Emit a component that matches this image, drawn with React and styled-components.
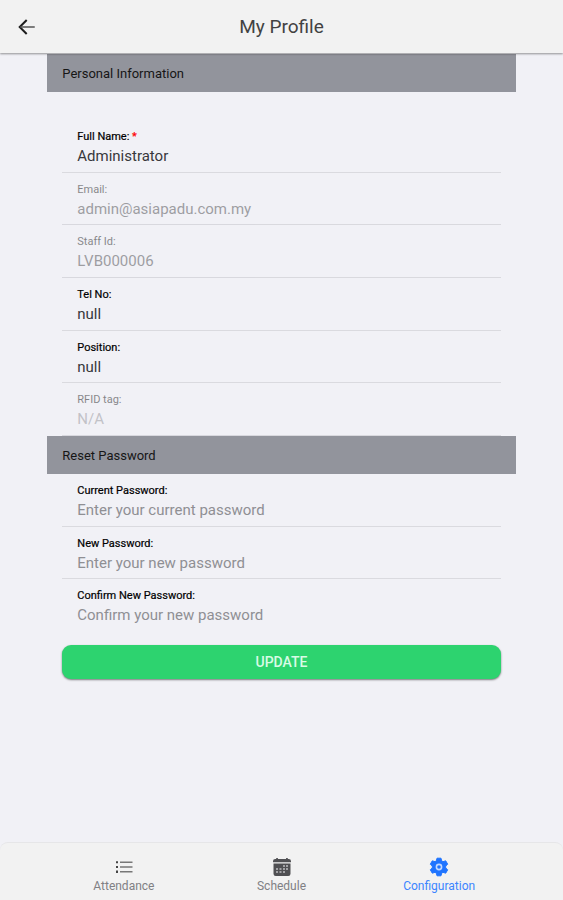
import React from "react";
import styled, { createGlobalStyle } from "styled-components";

const GlobalStyle = createGlobalStyle`
  *, *::before, *::after { box-sizing: border-box; }
  body {
    margin: 0;
    background: #f1f1f6;
    color: #202124;
    font-family: Roboto, "Liberation Sans", sans-serif;
  }
  button, input { font-family: inherit; }
`;

const Page = styled.div`
  display: flex;
  flex-direction: column;
  min-height: 100vh;
`;

const Header = styled.header`
  position: sticky;
  top: 0;
  z-index: 1;
  display: grid;
  grid-template-columns: 54px 1fr 54px;
  align-items: center;
  height: 53px;
  background: #f2f2f2;
  box-shadow: 0 1px 2px rgba(0, 0, 0, 0.4);
`;

const BackButton = styled.button`
  display: flex;
  align-items: center;
  justify-content: center;
  height: 40px;
  padding: 0;
  border: 0;
  background: none;
  color: #1c1c1c;
`;

const Title = styled.h1`
  margin: 0;
  font-size: 19px;
  font-weight: 400;
  line-height: 24px;
  text-align: center;
  color: #424242;
`;

const Form = styled.form`
  flex: 1;
  padding: 1px 8.4% 0;
`;

const SectionTitle = styled.h2`
  display: flex;
  align-items: center;
  height: 38px;
  margin: 0;
  padding: 0 15px;
  background: #92949c;
  color: #161616;
  font-size: 13px;
  font-weight: 400;
`;

const Fields = styled.div`
  display: grid;
  grid-auto-rows: 1fr;
  min-height: ${(p) => (p.$spaced ? 316 : 158)}px;
  margin-top: ${(p) => (p.$spaced ? 28 : 0)}px;
  padding: 0 15px;
`;

const Field = styled.div`
  display: flex;
  flex-direction: column;
  padding: 10px 15px 0;
  border-bottom: 1px solid ${(p) => (p.$plain ? "transparent" : p.$muted ? "#bcbcc2" : "#dadadf")};
  opacity: ${(p) => (p.$muted ? 0.45 : 1)};
`;

const Label = styled.label`
  font-size: 11px;
  line-height: 14px;
  color: #000;
  -webkit-text-stroke: ${(p) => (p.$muted ? "0" : "0.2px currentColor")};
`;

const Required = styled.span`
  color: #f00;
  -webkit-text-stroke-color: #f00;
`;

const TextInput = styled.input`
  width: 100%;
  height: 24px;
  padding: 0;
  border: 0;
  outline: 0;
  background: none;
  color: #38383c;
  font-size: 15px;

  &::placeholder {
    color: ${(p) => (p.disabled ? "#8a8a90" : "#8f8f94")};
    opacity: 1;
  }
`;

const UpdateButton = styled.button`
  display: block;
  width: calc(100% - 30px);
  height: 34px;
  margin: 13px 15px 24px;
  padding: 0 0 1px;
  border: 0;
  border-radius: 9px;
  background: #2dd36f;
  box-shadow: 0 1px 2px rgba(0, 0, 0, 0.5);
  color: #d9fbe6;
  font-size: 14px;
  font-weight: 500;
  text-transform: uppercase;
`;

const TabBar = styled.nav`
  position: sticky;
  bottom: 0;
  display: flex;
  justify-content: center;
  height: 58px;
  border-top: 1px solid #e6e6e8;
  border-radius: 8px 8px 0 0;
  background: #f2f2f2;
`;

const Tab = styled.a`
  display: flex;
  flex-direction: column;
  align-items: center;
  width: 28%;
  padding-top: 14px;
  gap: 2px;
  color: ${(p) => (p.$active ? "#3d85ff" : "#808084")};
  font-size: 12px;
  line-height: 14px;
  text-decoration: none;
`;

const Icon = styled.svg`
  display: block;
  width: 20px;
  height: 20px;
`;

const BackIcon = () => (
  <Icon viewBox="0 0 20 20" fill="none" stroke="currentColor" strokeLinecap="square" aria-hidden="true">
    <path d="M9 3.700 2.700 10 9 16.300" strokeWidth="2" />
    <path d="M4 10h13" strokeWidth="1.500" stroke="#555" />
  </Icon>
);

const ListIcon = () => (
  <Icon viewBox="0 0 20 20" aria-hidden="true">
    <path fill="#444" d="M2 4.200h2v2H2zM2 8.900h2v2.200H2zM2 13.600h2v2.400H2z" />
    <path fill="#777" d="M6 4.500h12.500v1.500H6zM6 9.300h12.500v1.500H6zM6 14h12.500v1.500H6z" />
  </Icon>
);

const CalendarIcon = () => (
  <Icon viewBox="0 0 20 20" fill="#505053" aria-hidden="true">
    <path d="M1 5.300V4.200A2.200 2.200 0 0 1 3.200 2h1V1h1.700v1h8.200V1h1.700v1h1A2.200 2.200 0 0 1 19 4.200v1.100z" />
    <path d="M1.500 6.500h17v10.300a2.200 2.200 0 0 1-2.200 2.200H3.700a2.200 2.200 0 0 1-2.200-2.200z" />
    <path fill="#a2a2a5" d="M11 8h2v2h-2zM14 8h2v2h-2zM4 11h2v2H4zM7.500 11h2v2h-2zM11 11h2v2h-2zM14 11h2v2h-2zM4 14h2v2H4zM7.500 14h2v2h-2zM11 14h2v2h-2z" />
  </Icon>
);

const GearIcon = () => (
  <Icon viewBox="0 0 20 20" aria-hidden="true">
    <path
      fill="#1f74ff"
      stroke="#1f74ff"
      strokeLinejoin="round"
      d="M8 1.200h4l.7 2.700 1.300.8 2.700-.9 2 3.400-2 1.900v1.800l2 1.900-2 3.400-2.700-.9-1.300.8-.7 2.700H8l-.7-2.700-1.300-.8-2.700.9-2-3.400 2-1.900V9.100l-2-1.900 2-3.400 2.700.9 1.300-.8z"
    />
    <circle cx="10" cy="10" r="2.600" fill="none" stroke="#c3d9ff" strokeWidth="1.600" />
  </Icon>
);

const profileFields = [
  { id: "name", label: "Full Name:", value: "Administrator", required: true },
  { id: "email", label: "Email:", value: "admin@asiapadu.com.my", disabled: true },
  { id: "staff", label: "Staff Id:", value: "LVB000006", disabled: true },
  { id: "tel", label: "Tel No:", value: "null" },
  { id: "position", label: "Position:", value: "null" },
  { id: "rfid", label: "RFID tag:", placeholder: "N/A", disabled: true },
];

const passwordFields = [
  { id: "current", label: "Current Password:", placeholder: "Enter your current password", type: "password" },
  { id: "new", label: "New Password:", placeholder: "Enter your new password", type: "password" },
  { id: "confirm", label: "Confirm New Password:", placeholder: "Confirm your new password", type: "password", plain: true },
];

const FormField = ({ id, label, value, placeholder, type = "text", required, disabled, plain }) => (
  <Field $muted={disabled} $plain={plain}>
    <Label htmlFor={id} $muted={disabled}>
      {label} {required && <Required>*</Required>}
    </Label>
    <TextInput id={id} type={type} defaultValue={value} placeholder={placeholder} required={required} disabled={disabled} />
  </Field>
);

const tabs = [
  { label: "Attendance", Glyph: ListIcon },
  { label: "Schedule", Glyph: CalendarIcon },
  { label: "Configuration", Glyph: GearIcon, active: true },
];

export default function App() {
  return (
    <Page>
      <GlobalStyle />
      <Header>
        <BackButton type="button" aria-label="Back">
          <BackIcon />
        </BackButton>
        <Title>My Profile</Title>
      </Header>
      <Form onSubmit={(e) => e.preventDefault()}>
        <SectionTitle>Personal Information</SectionTitle>
        <Fields $spaced>
          {profileFields.map((f) => <FormField key={f.id} {...f} />)}
        </Fields>
        <SectionTitle>Reset Password</SectionTitle>
        <Fields>
          {passwordFields.map((f) => <FormField key={f.id} {...f} />)}
        </Fields>
        <UpdateButton type="submit">Update</UpdateButton>
      </Form>
      <TabBar>
        {tabs.map(({ label, Glyph, active }) => (
          <Tab key={label} href="#" $active={active} aria-current={active ? "page" : undefined}>
            <Glyph />
            {label}
          </Tab>
        ))}
      </TabBar>
    </Page>
  );
}
